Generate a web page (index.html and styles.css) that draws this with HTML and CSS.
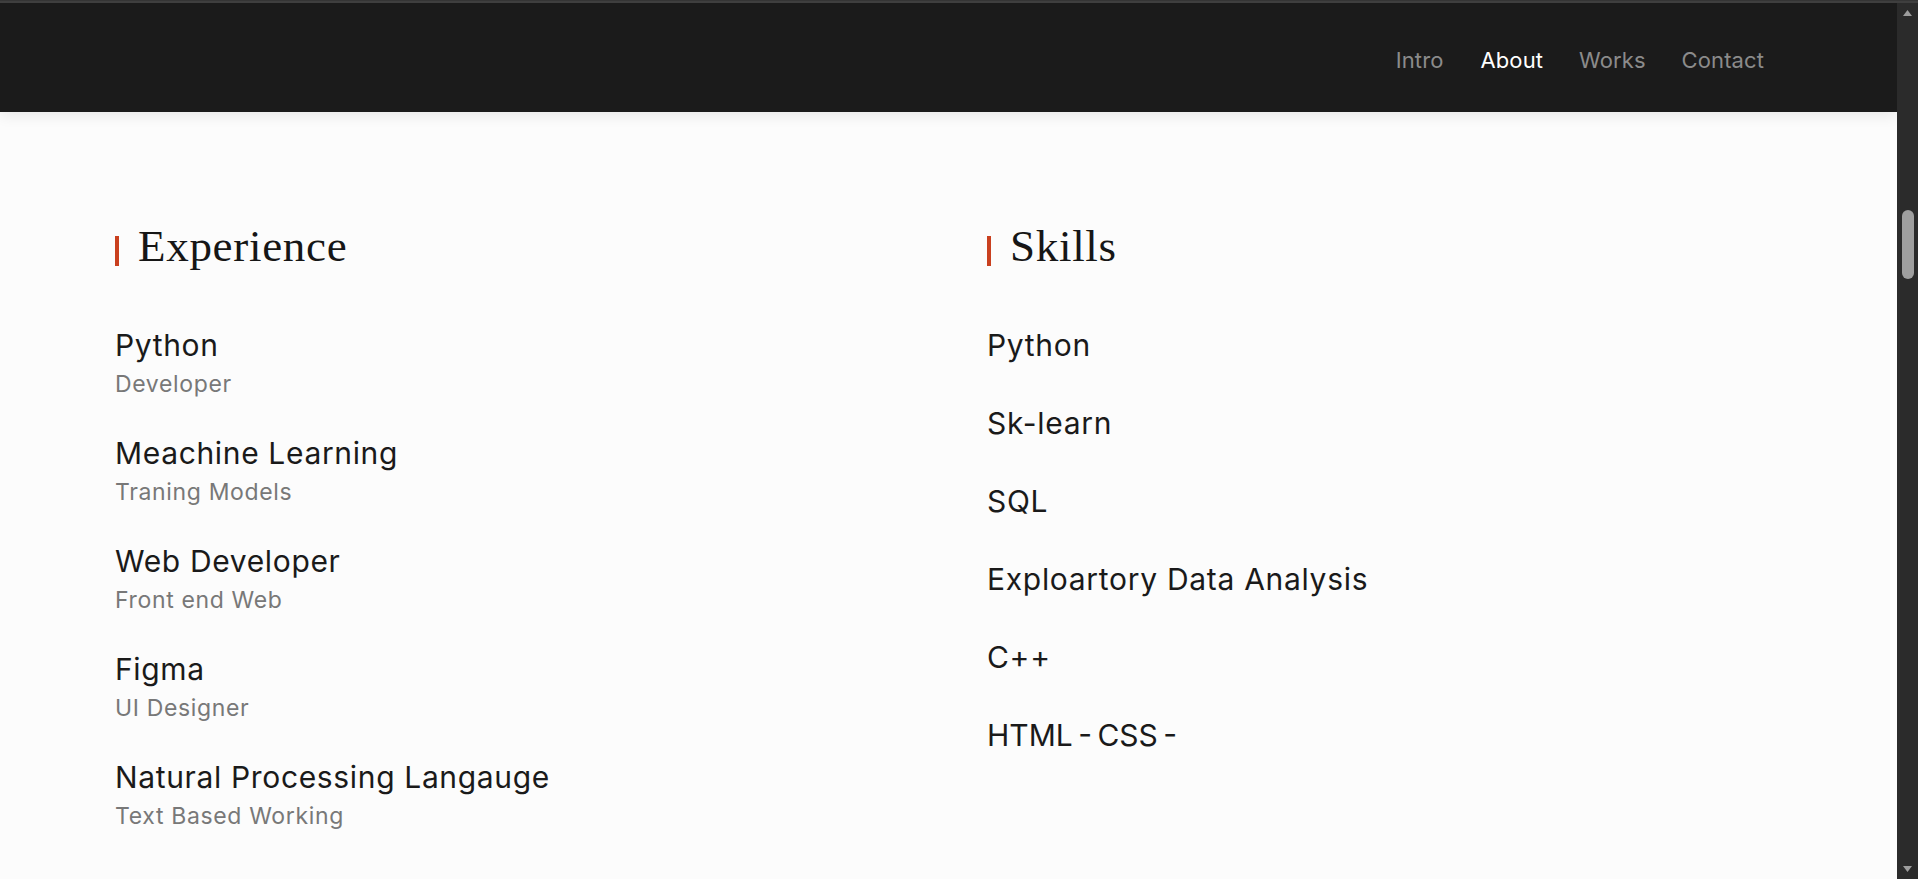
FILE: index.html
```html
<!DOCTYPE html>
<html lang="en">
<head>
<meta charset="utf-8">
<title>About</title>
<link rel="stylesheet" href="styles.css">
</head>
<body>
<div class="topline"></div>
<div class="viewport">
  <div class="page">
    <header class="site-header">
      <nav class="nav container">
        <a class="nav-link" href="#">Intro</a>
        <a class="nav-link active" href="#">About</a>
        <a class="nav-link" href="#">Works</a>
        <a class="nav-link" href="#">Contact</a>
      </nav>
    </header>
    <main class="about container">
      <section class="column">
        <h2 class="section-title">Experience</h2>
        <ul class="exp-list">
          <li class="exp-item"><div class="exp-title">Python</div><div class="exp-sub">Developer</div></li>
          <li class="exp-item"><div class="exp-title">Meachine Learning</div><div class="exp-sub">Traning Models</div></li>
          <li class="exp-item"><div class="exp-title">Web Developer</div><div class="exp-sub">Front end Web</div></li>
          <li class="exp-item"><div class="exp-title">Figma</div><div class="exp-sub">UI Designer</div></li>
          <li class="exp-item"><div class="exp-title">Natural Processing Langauge</div><div class="exp-sub">Text Based Working</div></li>
        </ul>
      </section>
      <section class="column">
        <h2 class="section-title">Skills</h2>
        <ul class="skill-list">
          <li class="skill">Python</li>
          <li class="skill">Sk-learn</li>
          <li class="skill">SQL</li>
          <li class="skill">Exploartory Data Analysis</li>
          <li class="skill">C++</li>
          <li class="skill skill-tight">HTML - CSS -</li>
        </ul>
      </section>
    </main>
  </div>
  <div class="scrollbar">
    <svg class="arrow" width="21" height="16" viewBox="0 0 21 16"><polygon points="6,13 15,13 10.5,7" fill="#9d9d9d"/></svg>
    <div class="track"><div class="thumb"></div></div>
    <svg class="arrow" width="21" height="16" viewBox="0 0 21 16"><polygon points="6,3 15,3 10.5,9" fill="#9d9d9d"/></svg>
  </div>
</div>
</body>
</html>
```

FILE: styles.css
```css
html, body {
  margin: 0;
  padding: 0;
  height: 100%;
  overflow: hidden;
}
body {
  background: #fcfcfc;
  font-family: Inter, "Noto Sans", "Liberation Sans", sans-serif;
  color: #1a1a1a;
  display: flex;
  flex-direction: column;
}
.topline {
  height: 3px;
  flex: none;
  background: #3f3f3f;
  border-top: 1px solid #353535;
  box-sizing: border-box;
}
.viewport {
  flex: 1;
  display: flex;
  min-height: 0;
}
.page {
  flex: 1;
  min-width: 0;
  overflow: hidden;
}
.container {
  margin: 0 115px;
}
.site-header {
  height: 109px;
  background: #1b1b1b;
  box-shadow: 0 3px 14px rgba(0, 0, 0, 0.09);
  position: relative;
  z-index: 1;
}
.nav {
  height: 100%;
  display: flex;
  justify-content: flex-end;
  align-items: center;
  padding-top: 4px;
  box-sizing: border-box;
}
.nav-link {
  font-size: 22px;
  color: #8b8b8b;
  text-decoration: none;
  padding: 0 18px;
  line-height: 30px;
  letter-spacing: 0.1px;
}
.nav-link:first-child {
  padding-right: 19px;
}
.nav-link.active {
  color: #ffffff;
}
.about {
  display: grid;
  grid-template-columns: 872px 1fr;
  padding-top: 112px;
}
.section-title {
  margin: 0;
  display: flex;
  align-items: center;
  gap: 19px;
  font-family: "Liberation Serif", "Times New Roman", serif;
  font-weight: 400;
  font-size: 45px;
  line-height: 45px;
  color: #161616;
  letter-spacing: 0.7px;
}
.section-title::before {
  content: "";
  width: 4px;
  height: 30px;
  margin-top: 8px;
  background: #c9401f;
  flex: none;
}
.exp-list, .skill-list {
  list-style: none;
  margin: 56px 0 0;
  padding: 0;
}
.exp-item {
  margin-bottom: 30px;
}
.exp-title {
  font-size: 30px;
  line-height: 38px;
  padding-top: 1px;
  padding-bottom: 1px;
  color: #1a1a1a;
  letter-spacing: 0.65px;
}
.exp-sub {
  font-size: 23px;
  line-height: 37px;
  margin-top: 1px;
  color: #787878;
  letter-spacing: 0.65px;
}
.skill {
  font-size: 30px;
  line-height: 40px;
  margin-bottom: 38px;
  color: #1a1a1a;
  letter-spacing: 0.7px;
}
.skill-tight {
  word-spacing: -3px;
  letter-spacing: 0;
}
.scrollbar {
  width: 21px;
  flex: none;
  background: #2b2b2b;
  display: flex;
  flex-direction: column;
}
.arrow {
  display: block;
  flex: none;
}
.track {
  flex: 1;
  padding-top: 191px;
}
.thumb {
  width: 12px;
  height: 69px;
  margin-left: 5px;
  border-radius: 6px;
  background: #9f9f9f;
}
```
